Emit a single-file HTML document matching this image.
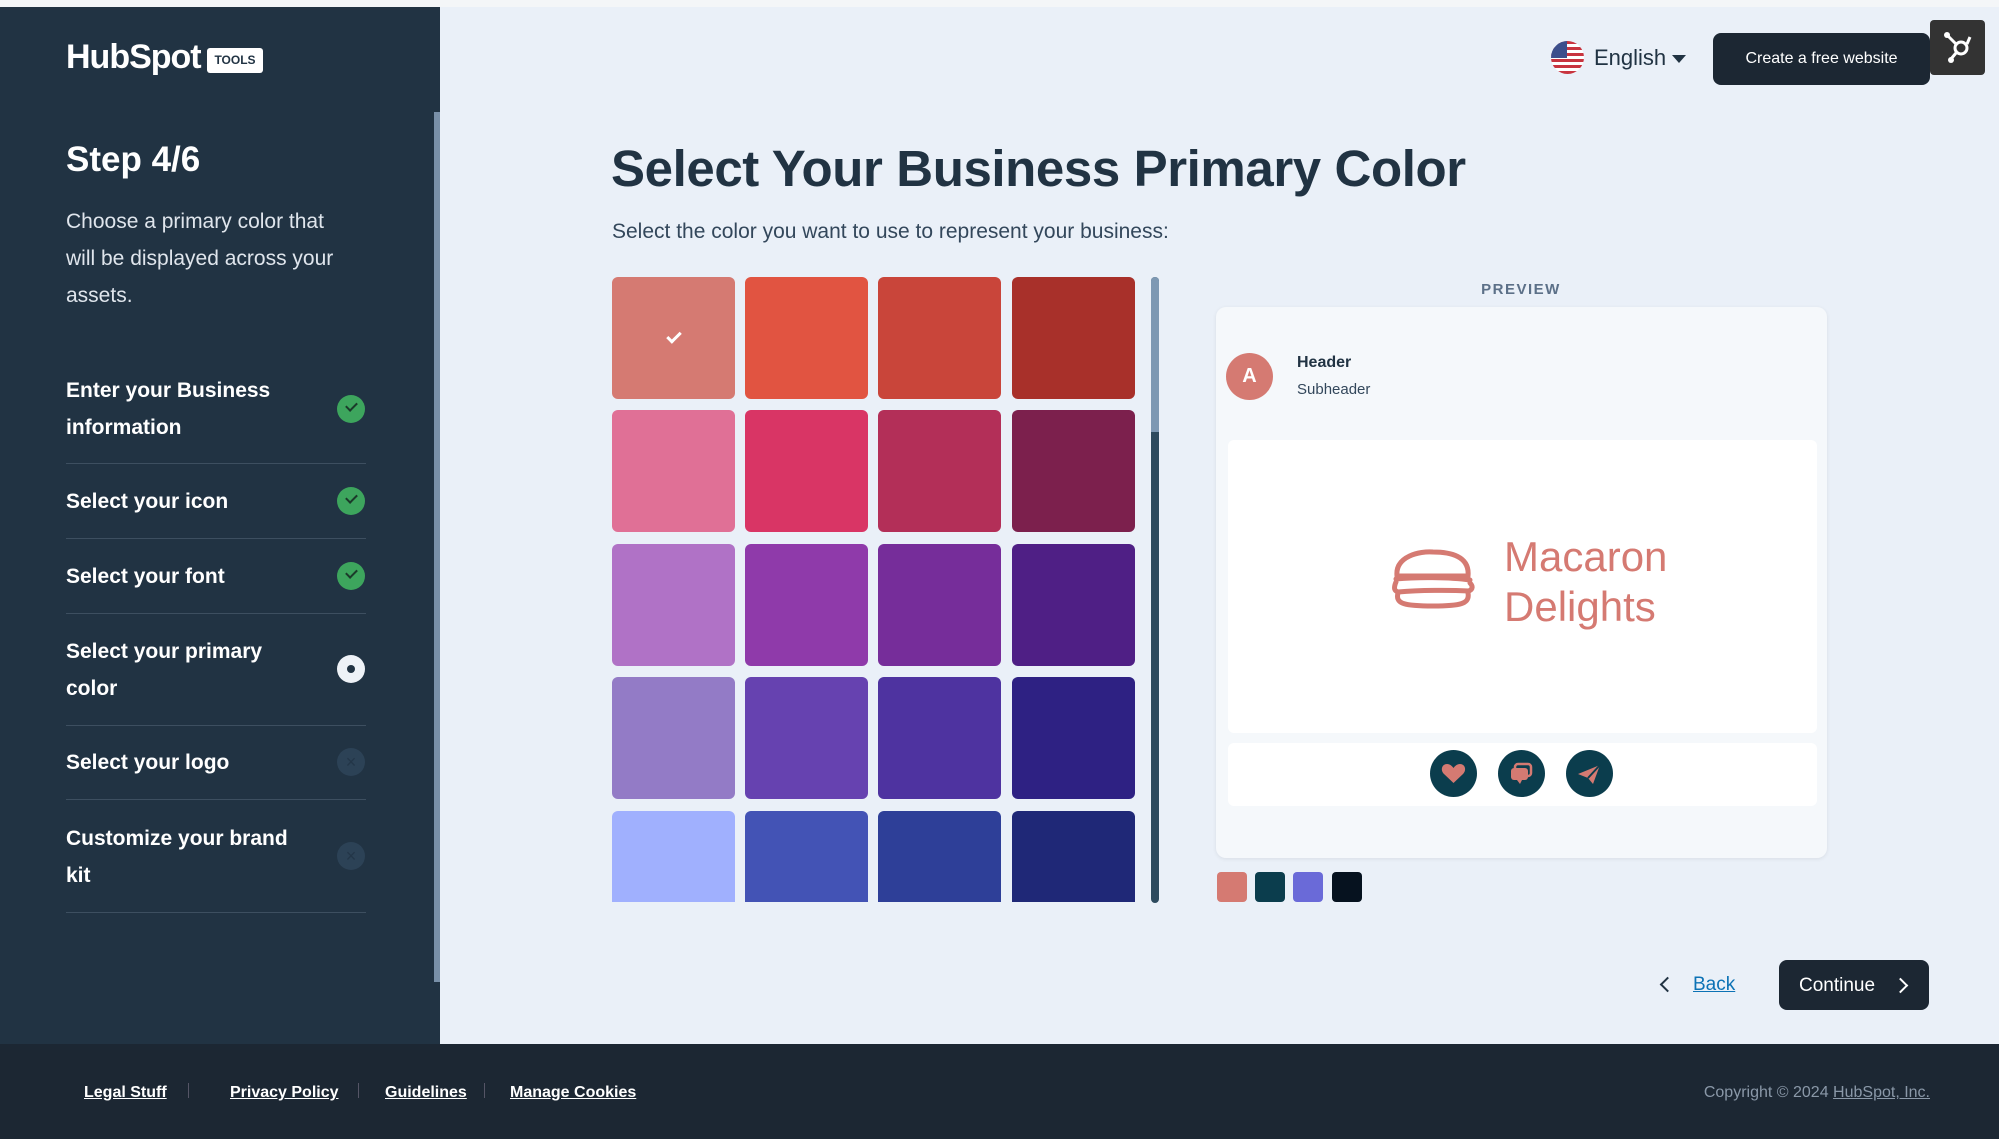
<!DOCTYPE html>
<html><head><meta charset="utf-8">
<style>
*{margin:0;padding:0;box-sizing:border-box}
body{width:1999px;height:1141px;overflow:hidden;background:#fff;font-family:"Liberation Sans",sans-serif;position:relative}
.abs{position:absolute}
#side{left:0;top:7px;width:440px;height:1037px;background:#213343}
#main{left:440px;top:7px;width:1559px;height:1037px;background:#eaf0f8}
#foot{left:0;top:1044px;width:1999px;height:95px;background:#1c2733}
.sb{color:#fff}
.step{left:66px;color:#fff;font-weight:bold;font-size:21px;line-height:37px;width:270px}
.sep{left:66px;width:300px;height:1px;background:#3d4f60}
.ic{left:337px;width:28px;height:28px;border-radius:50%}
.ok{background:#3da55d}
.ok:after{content:"";position:absolute;left:9px;top:7px;width:9px;height:5px;border-left:2.5px solid #1b3a2a;border-bottom:2.5px solid #1b3a2a;transform:rotate(-45deg)}
.na{background:#2c4256;color:#233648;font-size:18px;text-align:center;line-height:28px}
.sw{width:123px;height:122px;border-radius:6px;position:absolute}
.fl{color:#fff;font-size:16px;font-weight:bold;text-decoration:underline;top:1082px}
.pipe{top:1083px;width:1px;height:15px;background:#556}
.cir{width:47px;height:47px;border-radius:50%;background:#0b3d4d;top:750px}
</style></head><body>
<div class="abs" style="left:0;top:0;width:1999px;height:7px;background:#f4f6f8"></div>
<div id="side" class="abs"></div>
<div class="abs" style="left:434px;top:112px;width:6px;height:870px;background:#7990a8"></div>
<div id="main" class="abs"></div>
<div id="foot" class="abs"></div>

<div class="abs sb" style="left:66px;top:38px;font-size:34px;font-weight:bold;letter-spacing:-1px">HubSpot</div>
<div class="abs" style="left:207px;top:48px;width:56px;height:25px;background:#fff;border-radius:3px;color:#213343;font-size:12px;font-weight:bold;text-align:center;line-height:25px">TOOLS</div>

<div class="abs sb" style="left:66px;top:140px;font-size:35px;font-weight:bold">Step 4/6</div>
<div class="abs" style="left:66px;top:203px;font-size:21px;line-height:37px;color:#dfe5ec;width:290px">Choose a primary color that will be displayed across your assets.</div>

<div class="abs step" style="top:372px">Enter your Business<br>information</div>
<div class="abs ic ok" style="top:395px"></div>
<div class="abs sep" style="top:463px"></div>
<div class="abs step" style="top:483px">Select your icon</div>
<div class="abs ic ok" style="top:487px"></div>
<div class="abs sep" style="top:538px"></div>
<div class="abs step" style="top:558px">Select your font</div>
<div class="abs ic ok" style="top:562px"></div>
<div class="abs sep" style="top:613px"></div>
<div class="abs step" style="top:633px">Select your primary<br>color</div>
<div class="abs ic" style="top:655px;background:#eef2f7"><div class="abs" style="left:10px;top:10px;width:8px;height:8px;border-radius:50%;background:#213343"></div></div>
<div class="abs sep" style="top:725px"></div>
<div class="abs step" style="top:744px">Select your logo</div>
<div class="abs ic na" style="top:748px">×</div>
<div class="abs sep" style="top:799px"></div>
<div class="abs step" style="top:820px">Customize your brand<br>kit</div>
<div class="abs ic na" style="top:842px">×</div>
<div class="abs sep" style="top:912px"></div>

<div class="abs" style="left:1551px;top:41px;width:33px;height:33px;border-radius:50%;overflow:hidden;background:repeating-linear-gradient(#c8343f 0 3px,#fff 3px 6px)"><div style="width:16px;height:17px;background:#3c4f8c"></div></div>
<div class="abs" style="left:1594px;top:45px;font-size:22px;color:#213343">English</div>
<div class="abs" style="left:1672px;top:55px;width:0;height:0;border-left:7px solid transparent;border-right:7px solid transparent;border-top:8px solid #213343"></div>
<div class="abs" style="left:1713px;top:33px;width:217px;height:52px;background:#1c2733;border-radius:8px;color:#fff;font-size:16px;text-align:center;line-height:52px">Create a free website</div>
<div class="abs" style="left:1930px;top:20px;width:55px;height:55px;background:#333;border-radius:4px">
<svg width="55" height="55" viewBox="0 0 55 55"><g stroke="#fff" stroke-width="3" fill="none"><circle cx="31" cy="28" r="6"/><line x1="26" y1="24" x2="18" y2="16"/><line x1="37" y1="24" x2="40" y2="17"/><line x1="26" y1="33" x2="21" y2="39"/></g><circle cx="17" cy="15" r="3" fill="#fff"/><circle cx="21" cy="40" r="3" fill="#fff"/></svg></div>

<div class="abs" style="left:611px;top:139px;font-size:51px;font-weight:bold;color:#213343;letter-spacing:-0.4px">Select Your Business Primary Color</div>
<div class="abs" style="left:612px;top:220px;font-size:21px;color:#33475b">Select the color you want to use to represent your business:</div>

<div class="abs" style="left:612px;top:277px;width:523px;height:625px;overflow:hidden">
<div class="sw" style="left:0;top:0;background:#d57a72"><div class="abs" style="left:55px;top:55px;width:14px;height:8px;border-left:3px solid #fff;border-bottom:3px solid #fff;transform:rotate(-45deg)"></div></div>
<div class="sw" style="left:133px;top:0;background:#e15441"></div>
<div class="sw" style="left:266px;top:0;background:#c9453a"></div>
<div class="sw" style="left:400px;top:0;background:#a8302a"></div>
<div class="sw" style="left:0;top:133px;background:#e07096"></div>
<div class="sw" style="left:133px;top:133px;background:#d93565"></div>
<div class="sw" style="left:266px;top:133px;background:#b32f58"></div>
<div class="sw" style="left:400px;top:133px;background:#7c204d"></div>
<div class="sw" style="left:0;top:267px;background:#b072c6"></div>
<div class="sw" style="left:133px;top:267px;background:#8f3aaa"></div>
<div class="sw" style="left:266px;top:267px;background:#762d9a"></div>
<div class="sw" style="left:400px;top:267px;background:#4f1f85"></div>
<div class="sw" style="left:0;top:400px;background:#937bc6"></div>
<div class="sw" style="left:133px;top:400px;background:#6642b0"></div>
<div class="sw" style="left:266px;top:400px;background:#4e33a0"></div>
<div class="sw" style="left:400px;top:400px;background:#2e2183"></div>
<div class="sw" style="left:0;top:534px;background:#a0b0fe"></div>
<div class="sw" style="left:133px;top:534px;background:#4353b5"></div>
<div class="sw" style="left:266px;top:534px;background:#2e3f98"></div>
<div class="sw" style="left:400px;top:534px;background:#1f2877"></div>
</div>
<div class="abs" style="left:1151px;top:277px;width:8px;height:626px;border-radius:4px;background:#2d4a5e"></div>
<div class="abs" style="left:1151px;top:277px;width:8px;height:155px;border-radius:4px 4px 0 0;background:#7d98b3"></div>

<div class="abs" style="left:1421px;top:281px;width:200px;text-align:center;font-size:15px;font-weight:bold;letter-spacing:1.5px;color:#5c7088">PREVIEW</div>
<div class="abs" style="left:1216px;top:307px;width:611px;height:551px;background:#f5f8fb;border-radius:10px;box-shadow:0 1px 4px rgba(0,0,0,.08)"></div>
<div class="abs" style="left:1226px;top:353px;width:47px;height:47px;border-radius:50%;background:#d57a72;color:#fff;font-weight:bold;font-size:20px;text-align:center;line-height:47px">A</div>
<div class="abs" style="left:1297px;top:354px;font-size:16px;font-weight:bold;color:#213343">Header</div>
<div class="abs" style="left:1297px;top:381px;font-size:15px;color:#33475b">Subheader</div>
<div class="abs" style="left:1228px;top:440px;width:589px;height:293px;background:#fff;border-radius:6px"></div>
<svg class="abs" style="left:1390px;top:546px" width="86" height="64" viewBox="0 0 86 64"><g fill="none" stroke="#d57a72" stroke-width="5" stroke-linecap="round"><path d="M7 30 C5 10 30 5 43 6 C60 6 80 10 78 30 Z"/><path d="M6 33 C25 31 60 31 80 34"/><path d="M6 36 C3 43 5 45 8 46 C30 44 60 44 79 45 C83 43 83 40 80 37"/><path d="M8 47 C5 58 15 60 43 60 C70 60 80 58 78 47"/></g></svg>
<div class="abs" style="left:1504px;top:532px;font-size:42px;line-height:50px;color:#d57a72">Macaron<br>Delights</div>
<div class="abs" style="left:1228px;top:743px;width:589px;height:63px;background:#fff;border-radius:6px"></div>
<div class="abs cir" style="left:1430px"><svg width="47" height="47" viewBox="0 0 47 47"><path d="M23.5 33 L14 24 C10 20 12 14 17 14 C20 14 22 16 23.5 18 C25 16 27 14 30 14 C35 14 37 20 33 24 Z" fill="#d57a72"/></svg></div>
<div class="abs cir" style="left:1498px"><svg width="47" height="47" viewBox="0 0 47 47"><rect x="17" y="14" width="16" height="12" rx="3" fill="none" stroke="#d57a72" stroke-width="2.5"/><rect x="13" y="18" width="17" height="12" rx="3" fill="#d57a72"/><path d="M19 30 L22 34 L24 30Z" fill="#d57a72"/></svg></div>
<div class="abs cir" style="left:1566px"><svg width="47" height="47" viewBox="0 0 47 47"><path d="M12 24 L34 15 L27 34 L22 28 Z" fill="#d57a72"/><path d="M22 28 L34 15" stroke="#0b3d4d" stroke-width="2"/></svg></div>
<div class="abs" style="left:1217px;top:872px;width:30px;height:30px;border-radius:4px;background:#d57a72"></div>
<div class="abs" style="left:1255px;top:872px;width:30px;height:30px;border-radius:4px;background:#0b3d4d"></div>
<div class="abs" style="left:1293px;top:872px;width:30px;height:30px;border-radius:4px;background:#6a6ad8"></div>
<div class="abs" style="left:1332px;top:872px;width:30px;height:30px;border-radius:4px;background:#06121f"></div>

<div class="abs" style="left:1662px;top:979px;width:11px;height:11px;border-left:2.5px solid #213343;border-bottom:2.5px solid #213343;transform:rotate(45deg)"></div>
<div class="abs" style="left:1693px;top:974px;font-size:19px;color:#0c72b5;text-decoration:underline">Back</div>
<div class="abs" style="left:1779px;top:960px;width:150px;height:50px;background:#1c2733;border-radius:8px;color:#fff;font-size:19px;line-height:52px;padding-left:20px">Continue</div>
<div class="abs" style="left:1895px;top:980px;width:11px;height:11px;border-right:2.5px solid #fff;border-top:2.5px solid #fff;transform:rotate(45deg)"></div>

<div class="abs fl" style="left:84px;top:1084px">Legal Stuff</div>
<div class="abs pipe" style="left:188px"></div>
<div class="abs fl" style="left:230px;top:1084px">Privacy Policy</div>
<div class="abs pipe" style="left:358px"></div>
<div class="abs fl" style="left:385px;top:1084px">Guidelines</div>
<div class="abs pipe" style="left:484px"></div>
<div class="abs fl" style="left:510px;top:1084px">Manage Cookies</div>
<div class="abs" style="right:69px;top:1084px;font-size:16px;color:#8a98a8">Copyright © 2024 <span style="text-decoration:underline">HubSpot, Inc.</span></div>
</body></html>
